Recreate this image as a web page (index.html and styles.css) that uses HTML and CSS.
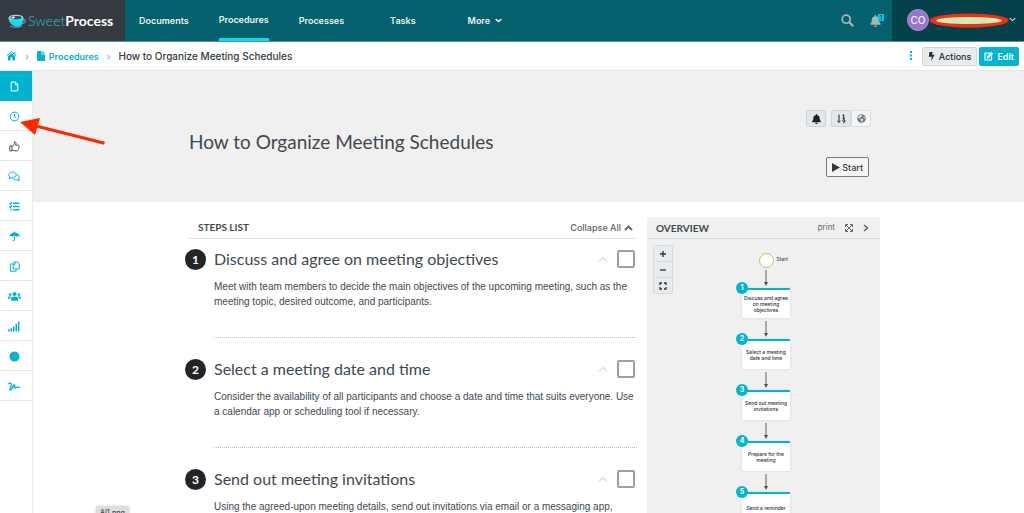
FILE: index.html
```html
<!DOCTYPE html>
<html lang="en">
<head>
<meta charset="utf-8">
<meta name="viewport" content="width=device-width, initial-scale=1">
<title>How to Organize Meeting Schedules - SweetProcess</title>
<link rel="stylesheet" href="styles.css">
</head>
<body>
<header class="topbar">
  <a class="brand" href="#" aria-label="SweetProcess">
    <svg class="brand-mark" viewBox="0 0 18 14" aria-hidden="true"><path d="M13 5.500h3.200c1.200 0 1.300 1.800.2 3-1.200 1.300-3 1.800-4.600 1.800M2 12c4 1.700 9 1.600 12-.4" fill="none" stroke="#6d8790" stroke-width="1.300"/><path d="M.3 4h15.500c0 4-2.600 8.800-6.700 8.800S.6 8.400.3 4z" fill="#14dcee"/><ellipse cx="8" cy="3.500" rx="7.300" ry="2.800" fill="#b5e3e8"/><ellipse cx="8" cy="3.700" rx="5.800" ry="1.900" fill="#235b68"/><path d="M3 3.500l3-1.200 1 1.200-2 1.200z" fill="#fff"/></svg>
    <span class="brand-name"><span class="brand-light">Sweet</span><span class="brand-bold">Process</span></span>
  </a>
  <nav class="nav">
    <a href="#">Documents</a>
    <a href="#" class="current">Procedures</a>
    <a href="#" class="processes">Processes</a>
    <a href="#" class="tasks">Tasks</a>
    <a href="#" class="more">More <svg viewBox="0 0 10 7" width="7" height="5" aria-hidden="true"><path d="M1 1.500l4 3.500 4-3.500" fill="none" stroke="currentColor" stroke-width="2"/></svg></a>
  </nav>
  <div class="tools">
    <button class="plain" aria-label="Search"><svg width="13" height="13" viewBox="0 0 13 13"><circle cx="5.200" cy="5.200" r="4" fill="none" stroke="currentColor" stroke-width="1.800"/><path d="M8.200 8.200l4 4" stroke="currentColor" stroke-width="2.200"/></svg></button>
    <button class="plain bell" aria-label="Notifications"><svg width="11" height="12" viewBox="0 0 448 512"><path fill="currentColor" d="M224 512c35.300 0 64-28.700 64-64H160c0 35.300 28.700 64 64 64zm215-150c-19-21-55-52-55-154 0-78-54-140-128-155V32a32 32 0 0 0-64 0v21C118 68 64 130 64 208c0 102-36 133-55 154-6 6-9 14-9 22 0 16 13 32 32 32h384c19 0 32-16 32-32 0-8-3-16-9-22z"/></svg><span class="count">1</span></button>
  </div>
  <button class="user" aria-label="Account menu">
    <span class="avatar">CO</span>
    <svg class="redaction" viewBox="0 0 80 15" aria-hidden="true"><ellipse cx="40" cy="7.500" rx="39.500" ry="7" fill="#f82d10"/><ellipse cx="40" cy="7.500" rx="33" ry="3.600" fill="#cdebb2"/></svg>
    <svg width="7" height="5" viewBox="0 0 10 7" aria-hidden="true"><path d="M1 1.500l4 3.500 4-3.500" fill="none" stroke="currentColor" stroke-width="1.600"/></svg>
  </button>
</header>

<div class="crumbbar">
  <nav class="crumbs" aria-label="Breadcrumb">
    <a href="#" aria-label="Home"><svg width="11" height="10" viewBox="0 0 22 20"><path fill="currentColor" d="M11 4.500l7 6V18a1 1 0 0 1-1 1h-4v-6H9v6H5a1 1 0 0 1-1-1v-7.500z"/><path d="M1 10l10-8.500L21 10M17.500 2v5" fill="none" stroke="currentColor" stroke-width="2"/></svg></a>
    <span class="sep">›</span>
    <a href="#"><svg width="8" height="10" viewBox="0 0 8 10" aria-hidden="true"><path fill="currentColor" d="M0 0h4.500v3.500H8V10H0zM5.300 0L8 2.700H5.300z"/></svg>Procedures</a>
    <span class="sep">›</span>
    <span class="here">How to Organize Meeting Schedules</span>
  </nav>
  <div class="crumb-actions">
    <button class="dots" aria-label="More options"><svg width="4" height="9" viewBox="0 0 4 9"><path fill="currentColor" d="M1 0h2v2H1zM1 3.500h2v2H1zM1 7h2v2H1z"/></svg></button>
    <button class="btn grey"><svg width="7" height="9" viewBox="0 0 7 9" aria-hidden="true"><path fill="currentColor" d="M1.500 0h3.200L4 2.800h2.700L3 9l.8-4.200H.8z"/></svg>Actions</button>
    <button class="btn teal"><svg width="10" height="10" viewBox="0 0 20 20" aria-hidden="true"><path d="M12 4H2v14h13v-7" fill="none" stroke="currentColor" stroke-width="2.400"/><path fill="currentColor" d="M14.500 1.500l4 4L10 14l-4.500.8L6.200 10z"/></svg>Edit</button>
  </div>
</div>

<div class="shell">
  <nav class="rail" aria-label="Procedure sections">
    <a href="#" class="active" aria-label="Document"><svg viewBox="0 0 20 20"><path d="M4 2h8l4 4v12H4zM11.500 2v5H16"/></svg></a>
    <a href="#" aria-label="History"><svg viewBox="0 0 20 20"><circle cx="10" cy="10" r="8"/><path d="M10 5v5.500l3.500 2"/></svg></a>
    <a href="#" class="dark" aria-label="Approvals"><svg viewBox="0 0 20 20"><path d="M1.500 9h4v9h-4zM5.500 10l4-4.500.5-4c3-.5 3.500 2.500 2 6h5c2 0 2 2.500.7 3.200 1 1.300.4 2.500-.7 3 .5 1.300 0 2-1 2.500 0 1.500-1 1.800-2.500 1.800-3 0-4.500-.2-8-1.500"/></svg></a>
    <a href="#" aria-label="Comments"><svg viewBox="0 0 22 20"><path d="M2 14l1.500-3C-1 7 3 2 8 2s8 3.500 6.300 7-6 4.300-8.800 3.300zM15 6.500c5 .5 7 5 4 8l1.500 3-4-1.500c-3 .8-6 0-7.500-2.500"/></svg></a>
    <a href="#" aria-label="Tasks"><svg viewBox="0 0 20 20"><path d="M7.500 4H19M7.500 10H19M7.500 16H19M1 4l1.500 1.500L5.500 2M1 10l1.500 1.500L5.500 8M2 16h2.500" stroke-width="2.600"/></svg></a>
    <a href="#" aria-label="Policies"><svg viewBox="0 0 20 20"><path class="fill" d="M9 2.500V1h2v1.500c4.500.3 8 3.500 9 8-2.500-2.200-4.500-2-6.500.3-2-2.600-5-2.600-7 0-2-2.300-4-2.500-6.500-.3 1-4.500 4.500-7.700 9-8z"/><path d="M10 10v6c0 2.500-3.500 2.500-3.500 0"/></svg></a>
    <a href="#" aria-label="Duplicate"><svg viewBox="0 0 20 20"><path d="M9.500 1.500h5L18.500 5v9.500h-11V5zM11 2v4H7.500M7 5.500H2.500v13H13v-4"/></svg></a>
    <a href="#" aria-label="Teams"><svg viewBox="0 0 24 20"><g class="fill"><circle cx="12" cy="5.500" r="3.700"/><circle cx="4" cy="6.500" r="2.400"/><circle cx="20" cy="6.500" r="2.400"/><path d="M5.500 18v-4c0-2.300 1.500-3.700 3.500-3.700h6c2 0 3.500 1.400 3.500 3.700v4zM0 14v-2.500C0 10.500 1 10 2 10h4c-1.500 1-2 2.300-2 4zM24 14v-2.500c0-1-1-1.500-2-1.500h-4c1.500 1 2 2.300 2 4z"/></g></svg></a>
    <a href="#" aria-label="Reports"><svg viewBox="0 0 22 20"><path d="M1.500 19v-4M6 19v-6M10.500 19v-9M15 19V5M19.500 19V1" stroke-width="2.800"/></svg></a>
    <a href="#" aria-label="Certificates"><svg viewBox="0 0 20 20"><path class="fill" d="M10 0l2 2 3-.8.8 3 3 .8-.8 3 2 2-2 2 .8 3-3 .8-.8 3-3-.8-2 2-2-2-3 .8-.8-3-3-.8.8-3-2-2 2-2-.8-3 3-.8.8-3 3 .8z"/></svg></a>
    <a href="#" aria-label="Sign-off"><svg viewBox="0 0 22 20"><path d="M0 5.500c2-1.500 5-2.500 6 0 .7 2.500-1.500 5-2.500 8-.7 3 1 3.500 3 1.500C9 12 9 7 11.500 7c2 0-1.500 5.500.5 5.500s2.500-2.500 4-1 3 .5 6-.7" stroke-width="2.400"/></svg></a>
  </nav>

  <main class="main">
    <section class="hero">
      <div class="container hero-row">
        <h1>How to Organize Meeting Schedules</h1>
        <div class="hero-side">
          <div class="toggles">
            <button class="tog on" aria-label="Subscribe"><svg width="9" height="10" viewBox="0 0 448 512"><path fill="currentColor" d="M224 512c35.300 0 64-28.700 64-64H160c0 35.300 28.700 64 64 64zm215-150c-19-21-55-52-55-154 0-78-54-140-128-155V32a32 32 0 0 0-64 0v21C118 68 64 130 64 208c0 102-36 133-55 154-6 6-9 14-9 22 0 16 13 32 32 32h384c19 0 32-16 32-32 0-8-3-16-9-22z"/></svg></button>
            <div class="pair">
              <button class="tog on" aria-label="Sort"><svg width="9" height="10" viewBox="0 0 18 20"><path d="M4 1v15M1 13.500L4 17l3-3.500M11 3l2.500-1.500V8M11 8.500h5" fill="none" stroke="currentColor" stroke-width="2"/><path d="M15.500 13a2 2 0 1 0-4 0 2 2 0 0 0 4 0c0 3-1 4.500-3 5" fill="none" stroke="currentColor" stroke-width="2"/></svg></button>
              <button class="tog" aria-label="Public"><svg width="9" height="9" viewBox="0 0 18 18"><circle cx="9" cy="9" r="8.500" fill="#6c757d"/><path d="M7 2l4 .5-1 2.500-3 1.500L5 9 2 8l1-3.500zM8 9l3 .5 1.500 2L11 15l-2 1-1-3.500L6 11zM13 5l3 2-.5 3-2.500-2z" fill="#dfe1e3"/></svg></button>
            </div>
          </div>
          <button class="start"><svg width="8" height="9" viewBox="0 0 8 9" aria-hidden="true"><path fill="currentColor" d="M0 0l8 4.500L0 9z"/></svg>Start</button>
        </div>
      </div>
    </section>

    <div class="container columns">
      <section class="steps">
        <div class="steps-head"><h2>STEPS LIST</h2><button class="plain collapse">Collapse All <svg width="9" height="6" viewBox="0 0 9 6" aria-hidden="true"><path d="M1 5l3.500-3.500L8 5" fill="none" stroke="currentColor" stroke-width="1.800"/></svg></button></div>
        <article class="step">
          <span class="num">1</span>
          <div class="step-body">
            <div class="step-title"><h3><label for="s1">Discuss and agree on meeting objectives</label></h3><button class="plain caret" aria-label="Collapse step 1"><svg width="10" height="6" viewBox="0 0 10 6"><path d="M1 5.500L5 1.500l4 4" fill="none" stroke="currentColor" stroke-width="1.500"/></svg></button><input type="checkbox" id="s1"></div>
            <p>Meet with team members to decide the main objectives of the upcoming meeting, such as the meeting topic, desired outcome, and participants.</p>
          </div>
        </article>
        <article class="step">
          <span class="num">2</span>
          <div class="step-body">
            <div class="step-title"><h3><label for="s2">Select a meeting date and time</label></h3><button class="plain caret" aria-label="Collapse step 2"><svg width="10" height="6" viewBox="0 0 10 6"><path d="M1 5.500L5 1.500l4 4" fill="none" stroke="currentColor" stroke-width="1.500"/></svg></button><input type="checkbox" id="s2"></div>
            <p>Consider the availability of all participants and choose a date and time that suits everyone. Use a&nbsp;calendar app or scheduling tool if necessary.</p>
          </div>
        </article>
        <article class="step">
          <span class="num">3</span>
          <div class="step-body">
            <div class="step-title"><h3><label for="s3">Send out meeting invitations</label></h3><button class="plain caret" aria-label="Collapse step 3"><svg width="10" height="6" viewBox="0 0 10 6"><path d="M1 5.500L5 1.500l4 4" fill="none" stroke="currentColor" stroke-width="1.500"/></svg></button><input type="checkbox" id="s3"></div>
            <p>Using the agreed-upon meeting details, send out invitations via email or a messaging app,</p>
          </div>
        </article>
      </section>

      <aside class="overview">
        <div class="ov-head">
          <h2>OVERVIEW</h2>
          <a href="#">print</a>
          <button class="plain" aria-label="Expand"><svg width="8" height="8" viewBox="0 0 16 16"><path d="M2 2l12 12M14 2L2 14M1 6V1h5M10 1h5v5M15 10v5h-5M6 15H1v-5" fill="none" stroke="currentColor" stroke-width="2"/></svg></button>
          <button class="plain" aria-label="Hide overview"><svg width="6" height="8" viewBox="0 0 6 8"><path d="M1 1l3.500 3L1 7" fill="none" stroke="currentColor" stroke-width="1.600"/></svg></button>
        </div>
        <div class="ov-body">
          <div class="zoomer">
            <button aria-label="Zoom in"><svg viewBox="0 0 8 8"><path d="M4 1v6M1 4h6"/></svg></button>
            <button aria-label="Zoom out"><svg viewBox="0 0 8 8"><path d="M1 4h6"/></svg></button>
            <button aria-label="Fit"><svg viewBox="0 0 8 8"><path d="M1 3V1h2M5 1h2v2M7 5v2H5M3 7H1V5"/></svg></button>
          </div>
          <div class="flow">
            <div class="origin"><span class="ring"></span><span class="origin-label">Start</span></div>
            <svg class="arrow" viewBox="0 0 6 21"><path d="M3 3v13" stroke="#5c6263"/><path d="M1 15h4l-2 4z" fill="#4c5253"/></svg>
            <div class="node"><span class="badge">1</span>Discuss and agree on meeting objectives</div>
            <svg class="arrow" viewBox="0 0 6 21"><path d="M3 3v13" stroke="#5c6263"/><path d="M1 15h4l-2 4z" fill="#4c5253"/></svg>
            <div class="node"><span class="badge">2</span>Select a meeting date and time</div>
            <svg class="arrow" viewBox="0 0 6 21"><path d="M3 3v13" stroke="#5c6263"/><path d="M1 15h4l-2 4z" fill="#4c5253"/></svg>
            <div class="node"><span class="badge">3</span>Send out meeting invitations</div>
            <svg class="arrow" viewBox="0 0 6 21"><path d="M3 3v13" stroke="#5c6263"/><path d="M1 15h4l-2 4z" fill="#4c5253"/></svg>
            <div class="node"><span class="badge">4</span>Prepare for the meeting</div>
            <svg class="arrow" viewBox="0 0 6 21"><path d="M3 3v13" stroke="#5c6263"/><path d="M1 15h4l-2 4z" fill="#4c5253"/></svg>
            <div class="node"><span class="badge">5</span>Send a reminder</div>
          </div>
        </div>
      </aside>
    </div>
  </main>
</div>
<svg class="pointer" viewBox="0 0 86 30" aria-hidden="true"><path d="M84.500 25.300L16 8" stroke="#ff2600" stroke-width="3" fill="none"/><path d="M0 4l20-4-5 17z" fill="#ff2600"/></svg>
<div class="filetip">AI1.png</div>
</body>
</html>
```
FILE: styles.css
```css
* { box-sizing: border-box; }
body {
  margin: 0;
  height: 100vh;
  overflow: hidden;
  display: flex;
  flex-direction: column;
  background: #fff;
  color: #3f4951;
  font: 500 9px/15px Inter, "Liberation Sans", sans-serif;
}
a { color: inherit; text-decoration: none; }
button { font: inherit; color: inherit; cursor: pointer; }
h1, h2, h3, p { margin: 0; }
svg { flex: none; }
.plain { border: 0; background: none; padding: 0; display: flex; align-items: center; }

.topbar { display: flex; flex: none; height: 42px; background: #04606c; border-bottom: 1px solid #5d929a; color: #edf5f6; }
.brand { width: 125px; display: flex; align-items: center; gap: 2px; padding-left: 8px; background: #343a40; }
.brand-mark { width: 18px; height: 14px; }
.brand-name { font: 400 14px/18px Lato, sans-serif; }
.brand-light { color: #35c0cd; font-weight: 300; }
.brand-bold { color: #fff; font-weight: 700; }
.nav { display: flex; flex: 1; padding-left: 14px; gap: 30px; font-weight: 600; }
.nav a { display: flex; align-items: center; gap: 5px; }
.nav .current { border-bottom: 3px solid #05dcf2; }
.nav .tasks { padding: 0 22px 0 16px; }
.tools { display: flex; align-items: center; gap: 16px; padding-right: 6px; color: #a3b6b9; }
.bell { position: relative; padding-right: 5px; }
.count { position: absolute; top: -1px; right: 2px; width: 6px; background: #05c8dc; color: #04444c; font-size: 6px; line-height: 7px; }
.user { display: flex; align-items: center; width: 132px; padding: 0 6px 2px 15px; border: 0; background: #04414a; color: #d5e0e1; }
.avatar { width: 22px; height: 22px; border-radius: 50%; background: #9675cd; border: 1px solid #ab9ac4; color: #f4effa; font-size: 10px; line-height: 20px; text-align: center; }
.redaction { width: 80px; height: 15px; margin-top: 2px; }

.crumbbar { display: flex; flex: none; align-items: center; justify-content: space-between; height: 29px; padding: 0 5px 0 6px; border-bottom: 1px solid #e6e6e6; }
.crumbs, .crumb-actions { display: flex; align-items: center; }
.crumbs { gap: 8px; font-weight: 600; }
.crumbs a { display: flex; align-items: center; gap: 4px; color: #00b3cf; }
.sep { color: #7abcc8; }
.here { color: #343a40; font-size: 10px; font-weight: 500; }
.crumb-actions { gap: 2px; }
.dots { border: 0; padding: 0 7px 0 0; background: none; color: #00b3cf; }
.btn { display: flex; align-items: center; gap: 4px; height: 19px; padding: 0 5px; border-radius: 2px; border: 1px solid #d3d7da; }
.grey { background: #e9ecef; color: #23292e; }
.teal { background: #00b5d0; border-color: #00b5d0; color: #fff; font-weight: 600; gap: 3px; padding: 0 4px; }

.shell { display: flex; flex: 1; min-height: 0; }
.rail { width: 33px; flex: none; border-right: 1px solid #ebebeb; }
.rail a { display: flex; height: 30px; align-items: center; justify-content: center; padding: 2px 4px 0 0; border-bottom: 1px solid #e4e6e8; color: #00b3cf; }
.rail .active { background: #00b3cf; border-color: #00b3cf; color: #fff; }
.rail .dark { color: #4b5258; }
.rail svg { height: 11px; max-width: 13px; fill: none; stroke: currentColor; stroke-width: 1.800; }
.rail .fill { fill: currentColor; stroke: none; }
.main { flex: 1; min-width: 0; overflow: hidden; }
.container { max-width: 703px; margin: 0 auto; padding-left: 12px; }
.hero { background: #f0f0f0; }
.hero-row { display: flex; justify-content: space-between; align-items: center; padding-top: 39px; padding-bottom: 25px; padding-right: 9px; }
h1 { font: 400 19px/28px Lato, sans-serif; padding-bottom: 4px; }
.hero-side { display: flex; flex-direction: column; align-items: flex-end; gap: 30px; }
.toggles, .pair { display: flex; gap: 5px; }
.pair { gap: 0; }
.tog { display: flex; align-items: center; justify-content: center; width: 20px; height: 17px; padding: 0; border: 1px solid #dce0e3; border-radius: 2px; background: #f4f5f6; color: #1e2327; }
.tog.on { background: #e4e7e9; border-color: #d0d4d7; }
.start { display: flex; align-items: center; gap: 2px; height: 20px; padding: 0 5px; margin-right: 2px; border: 1px solid #747a7e; border-radius: 2px; background: #f5f5f5; color: #343a40; }

.columns { display: flex; gap: 10px; align-items: flex-start; padding-top: 15px; }
.steps { flex: 1; min-width: 0; }
.steps-head { display: flex; justify-content: space-between; align-items: center; height: 22px; padding: 0 4px 0 9px; border-bottom: 1px solid #dfe1e2; }
.steps-head h2 { font: 700 10px/15px Lato, sans-serif; }
.collapse { gap: 3px; color: #5b646b; }
.step { display: flex; gap: 8px; margin-left: -4px; padding: 10px 0 11px; }
.num { flex: none; width: 21px; height: 21px; border-radius: 50%; background: #212529; color: #fff; font: 700 12px/21px Lato, sans-serif; text-align: center; }
.step-body { flex: 1; padding-bottom: 28px; border-bottom: 1px dotted #b9bdc0; }
.step-body p { font: 400 10px/15px "Liberation Sans", Arial, sans-serif; }
.step-title { display: flex; align-items: center; height: 20px; padding-right: 2px; margin-bottom: 10px; }
h3 { flex: 1; font: 400 16px/20px Lato, sans-serif; }
.caret { color: #dde1e4; margin-right: 9px; }
.step input { appearance: none; width: 18px; height: 18px; margin: 0; border: 2px solid #9aa0a6; border-radius: 2px; background: #fff; }

.overview { width: 233px; flex: none; min-height: 320px; background: #f0f0f0; border-radius: 3px; }
.ov-head { display: flex; align-items: center; gap: 10px; height: 22px; padding: 0 11px 0 9px; border-bottom: 1px solid #d9dbdc; color: #5f686f; }
.ov-head h2 { flex: 1; font: 700 10px/16px Lato, sans-serif; color: #3f4951; }
.ov-head a { font-size: 8px; font-weight: 400; }
.ov-body { position: relative; padding-top: 14px; }
.zoomer { position: absolute; top: 6px; left: 6px; width: 20px; border: 1px solid #d6dadd; border-radius: 2px; background: #e9ecef; }
.zoomer button { display: flex; align-items: center; justify-content: center; width: 18px; height: 15px; padding: 0; border: 0; background: none; color: #2c3237; }
.zoomer button + button { height: 16px; border-top: 1px solid #d6dadd; }
.zoomer svg { width: 8px; height: 8px; fill: none; stroke: currentColor; stroke-width: 1.300; }
.flow { display: flex; flex-direction: column; align-items: center; padding-left: 5px; }
.origin { position: relative; height: 14px; }
.ring { display: block; width: 15px; height: 15px; border: 1px solid #a9cf68; border-radius: 50%; background: #fff; }
.origin-label { position: absolute; left: 18px; top: 2px; font-size: 5px; line-height: 8px; }
.arrow { width: 6px; height: 21px; }
.node { position: relative; display: flex; align-items: center; justify-content: center; width: 48px; height: 30px; padding: 0 1px; border-top: 2px solid #00b5d0; border-radius: 1px; background: #fff; box-shadow: 0 0 2px #c8c8c8; color: #2c3033; font-size: 5px; line-height: 6px; text-align: center; }
.badge { position: absolute; left: -6px; top: -8px; width: 12px; height: 12px; border-radius: 50%; background: #00b5d0; color: #fff; font-size: 7px; font-weight: 700; line-height: 12px; }
.pointer { position: absolute; left: 20px; top: 118px; width: 86px; height: 30px; }
.filetip { position: absolute; left: 96px; bottom: -6px; padding: 0 4px; border-radius: 2px; background: #dedede; box-shadow: 0 0 3px #d0d0d0; font-size: 7px; line-height: 13px; }
```
